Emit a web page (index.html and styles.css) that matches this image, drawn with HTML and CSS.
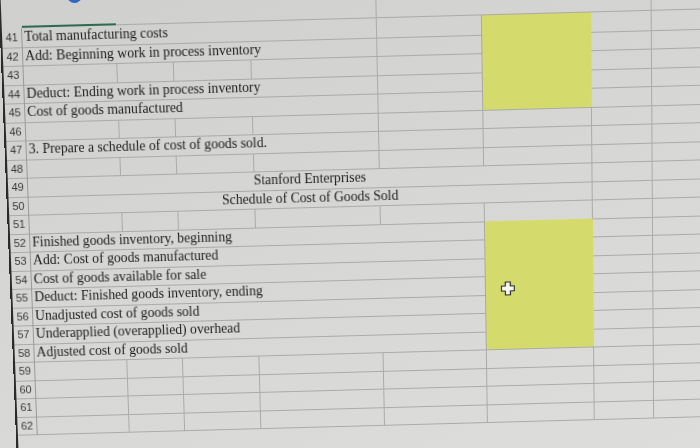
FILE: index.html
```
<!DOCTYPE html>
<html>
<head>
<meta charset="utf-8">
<link rel="stylesheet" href="styles.css">
</head>
<body>
<div class="sheet">
  <div class="strip">
    <div class="c hdr blank"></div>
    <div class="c sel"></div>
    <div class="c s3"></div>
    <div class="c s3"></div>
    <div class="c nb"></div>
  </div>

  <div class="row"><div class="c hdr">41</div><div class="c t s4">Total manufacturing costs</div><div class="c"></div><div class="c y"></div><div class="c"></div><div class="c"></div></div>
  <div class="row"><div class="c hdr">42</div><div class="c t s4">Add: Beginning work in process inventory</div><div class="c"></div><div class="c y"></div><div class="c"></div><div class="c"></div></div>
  <div class="row"><div class="c hdr">43</div><div class="c"></div><div class="c"></div><div class="c"></div><div class="c"></div><div class="c"></div><div class="c y"></div><div class="c"></div><div class="c"></div></div>
  <div class="row"><div class="c hdr">44</div><div class="c t s4">Deduct: Ending work in process inventory</div><div class="c"></div><div class="c y"></div><div class="c"></div><div class="c"></div></div>
  <div class="row"><div class="c hdr">45</div><div class="c t s4">Cost of goods manufactured</div><div class="c"></div><div class="c y yl"></div><div class="c"></div><div class="c"></div></div>
  <div class="row"><div class="c hdr">46</div><div class="c"></div><div class="c"></div><div class="c"></div><div class="c"></div><div class="c"></div><div class="c"></div><div class="c"></div><div class="c"></div></div>
  <div class="row"><div class="c hdr">47</div><div class="c t s4">3. Prepare a schedule of cost of goods sold.</div><div class="c"></div><div class="c"></div><div class="c"></div><div class="c"></div></div>
  <div class="row"><div class="c hdr">48</div><div class="c"></div><div class="c"></div><div class="c"></div><div class="c"></div><div class="c"></div><div class="c"></div><div class="c"></div><div class="c"></div></div>
  <div class="row"><div class="c hdr">49</div><div class="c t s6 ctr">Stanford Enterprises</div><div class="c"></div><div class="c"></div></div>
  <div class="row"><div class="c hdr">50</div><div class="c t s6 ctr">Schedule of Cost of Goods Sold</div><div class="c"></div><div class="c"></div></div>
  <div class="row"><div class="c hdr">51</div><div class="c"></div><div class="c"></div><div class="c"></div><div class="c"></div><div class="c"></div><div class="c"></div><div class="c"></div><div class="c"></div></div>
  <div class="row"><div class="c hdr">52</div><div class="c t s5">Finished goods inventory, beginning</div><div class="c y"></div><div class="c"></div><div class="c"></div></div>
  <div class="row"><div class="c hdr">53</div><div class="c t s5">Add: Cost of goods manufactured</div><div class="c y"></div><div class="c"></div><div class="c"></div></div>
  <div class="row"><div class="c hdr">54</div><div class="c t s5">Cost of goods available for sale</div><div class="c y"></div><div class="c"></div><div class="c"></div></div>
  <div class="row"><div class="c hdr">55</div><div class="c t s5">Deduct: Finished goods inventory, ending</div><div class="c y"></div><div class="c"></div><div class="c"></div></div>
  <div class="row"><div class="c hdr">56</div><div class="c t s5">Unadjusted cost of goods sold</div><div class="c y"></div><div class="c"></div><div class="c"></div></div>
  <div class="row"><div class="c hdr">57</div><div class="c t s5">Underapplied (overapplied) overhead</div><div class="c y"></div><div class="c"></div><div class="c"></div></div>
  <div class="row"><div class="c hdr">58</div><div class="c t s5">Adjusted cost of goods sold</div><div class="c y yl"></div><div class="c"></div><div class="c"></div></div>
  <div class="row"><div class="c hdr">59</div><div class="c"></div><div class="c"></div><div class="c"></div><div class="c"></div><div class="c"></div><div class="c"></div><div class="c"></div><div class="c"></div></div>
  <div class="row"><div class="c hdr">60</div><div class="c"></div><div class="c"></div><div class="c"></div><div class="c"></div><div class="c"></div><div class="c"></div><div class="c"></div><div class="c"></div></div>
  <div class="row"><div class="c hdr">61</div><div class="c"></div><div class="c"></div><div class="c"></div><div class="c"></div><div class="c"></div><div class="c"></div><div class="c"></div><div class="c"></div></div>
  <div class="row"><div class="c hdr">62</div><div class="c"></div><div class="c"></div><div class="c"></div><div class="c"></div><div class="c"></div><div class="c"></div><div class="c"></div><div class="c"></div></div>
  <div class="tail"></div>

  <svg class="cursor" width="14" height="14" viewBox="0 0 14 14"><path d="M4.5 0.5h5v4h4v5h-4v4h-5v-4h-4v-5h4z" fill="#f6f6f2" stroke="#2a2a2a" stroke-width="1.2" stroke-linejoin="round"/></svg>
</div>
<div class="dot"></div>
</body>
</html>
```
FILE: styles.css
```
html, body {
  margin: 0;
  padding: 0;
  width: 700px;
  height: 448px;
  overflow: hidden;
}
body {
  background: linear-gradient(160deg, #cfcfcd 0%, #d6d6d4 45%, #dddddb 100%);
  position: relative;
  font-family: "Liberation Serif", "Times New Roman", serif;
}
.sheet {
  --line: #aaaaa8;
  position: relative;
  margin-top: -16.5px;
  margin-left: 7.5px;
  width: 762px;
  border-left: 2px solid #2b2b2b;
  transform-origin: 343px 244.5px;
  transform: perspective(1000px) skewY(-0.3deg) rotate(-1.25deg) rotateX(-3deg);
}
.strip, .row {
  display: grid;
  grid-template-columns: 20px 93px 55.5px 77.5px 125px 103.5px 108.5px 60px 118px;
}
.strip {
  height: 37.2px;
}
.row {
  height: 18.5px;
}
.c {
  box-sizing: border-box;
  border-right: 1px solid var(--line);
  border-bottom: 1px solid var(--line);
  min-width: 0;
  white-space: nowrap;
  overflow: visible;
}
.hdr {
  font-family: "Liberation Sans", Arial, sans-serif;
  font-size: 11px;
  line-height: 18.5px;
  color: #3a3a3a;
  text-align: center;
  border-right-color: #999997;
}
.hdr.blank {
  border-bottom: none;
  border-right: none;
}
.sel {
  border-right: none;
  border-bottom: 2px solid #2f6b4c;
}
.s3 { grid-column: span 3; }
.s4 { grid-column: span 4; }
.s5 { grid-column: span 5; }
.s6 { grid-column: span 6; }
.nb { border-right: none; }
.t {
  font-size: 13.7px;
  line-height: 18.5px;
  color: #1b1b1b;
  padding-left: 2px;
}
.ctr {
  text-align: center;
  padding-left: 0;
}
.y {
  background: #d5da6c;
  border-bottom-color: #d5da6c;
  border-right-color: #d5da6c;
}
.y.yl {
  border-bottom-color: var(--line);
}
.tail {
  height: 70px;
}
.cursor {
  position: absolute;
  left: 490px;
  top: 302px;
}
.dot {
  position: absolute;
  left: 67px;
  top: -12px;
  width: 15px;
  height: 15px;
  border-radius: 50%;
  background: #2c67c4;
}
```
